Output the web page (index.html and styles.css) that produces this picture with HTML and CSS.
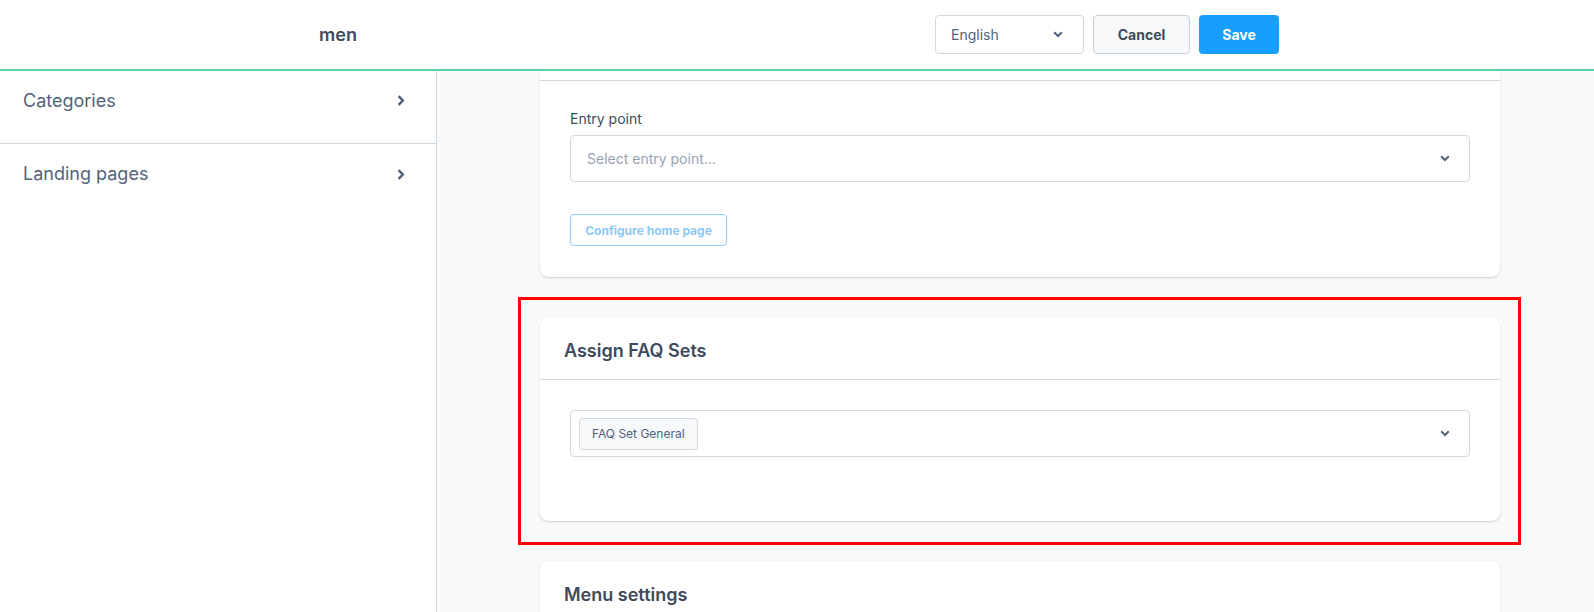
FILE: index.html
```html
<!DOCTYPE html>
<html lang="en">
<head>
    <meta charset="UTF-8">
    <title>Edit menu</title>
    <meta name="viewport" content="width=device-width, initial-scale=1.0">
    <link rel="stylesheet" href="styles.css">
</head>
<body>

<header class="topbar">
    <div class="topbar-title">men</div>
    <div class="topbar-actions">
        <div class="lang-select">
            <span>English</span>
            <svg class="chev-down" width="10" height="7" viewBox="0 0 10 7"><path d="M1.2 1.2 5 5 8.8 1.2" fill="none" stroke="#52627a" stroke-width="2"/></svg>
        </div>
        <button class="btn btn-cancel">Cancel</button>
        <button class="btn btn-save">Save</button>
    </div>
</header>

<div class="layout">
    <aside class="sidebar">
        <div class="nav-item">
            <span>Categories</span>
            <svg class="chev-right" width="8" height="11" viewBox="0 0 8 11"><path d="M1.6 1.2 5.8 5.5 1.6 9.8" fill="none" stroke="#4f5f74" stroke-width="2.4"/></svg>
        </div>
        <div class="nav-item no-border">
            <span>Landing pages</span>
            <svg class="chev-right" width="8" height="11" viewBox="0 0 8 11"><path d="M1.6 1.2 5.8 5.5 1.6 9.8" fill="none" stroke="#4f5f74" stroke-width="2.4"/></svg>
        </div>
    </aside>

    <main class="main">
        <div class="content">
            <!-- header of this card is scrolled out of view -->
            <div class="card">
                <div class="card-header"></div>
                <div class="card-body card-body-home">
                    <label class="field-label">Entry point</label>
                    <div class="select">
                        <span class="placeholder">Select entry point...</span>
                        <svg class="chev-down" width="10" height="7" viewBox="0 0 10 7"><path d="M1.2 1.2 5 5 8.8 1.2" fill="none" stroke="#52627a" stroke-width="2"/></svg>
                    </div>
                    <button class="btn-outline" disabled>Configure home page</button>
                </div>
            </div>

            <div class="card highlight">
                <div class="card-header">Assign FAQ Sets</div>
                <div class="card-body">
                    <div class="select select-tags">
                        <span class="tag">FAQ Set General</span>
                        <svg class="chev-down" width="10" height="7" viewBox="0 0 10 7"><path d="M1.2 1.2 5 5 8.8 1.2" fill="none" stroke="#52627a" stroke-width="2"/></svg>
                    </div>
                </div>
            </div>

            <div class="card">
                <div class="card-header">Menu settings</div>
                <div class="card-body"></div>
            </div>
        </div>
    </main>
</div>

</body>
</html>
```

FILE: styles.css
```css
* {
    margin: 0;
    padding: 0;
    box-sizing: border-box;
    font-family: 'Inter', 'Noto Sans', sans-serif;
}

body {
    background: #fff;
    color: #3d4a5c;
    height: 612px;
    overflow: hidden;
}

.topbar {
    display: flex;
    align-items: center;
    height: 71px;
    padding-bottom: 1px;
    background: #fff;
    border-bottom: 2px solid #5bd3a0;
    position: relative;
    z-index: 2;
}

.topbar-title {
    width: 676px;
    text-align: center;
    font-size: 18px;
    font-weight: 600;
    color: #3d4a5c;
}

.topbar-actions {
    display: flex;
    gap: 9px;
    margin-left: 259px;
}

.lang-select {
    width: 149px;
    height: 39px;
    display: flex;
    align-items: center;
    justify-content: space-between;
    padding: 0 20px 0 15px;
    border: 1px solid #d1d9e0;
    border-radius: 4px;
    font-size: 14px;
    color: #52627a;
}

.btn {
    height: 39px;
    border-radius: 4px;
    font-size: 14px;
    font-weight: 700;
    cursor: pointer;
}

.btn-cancel {
    width: 97px;
    background: #f6f8fa;
    border: 1px solid #c9d2dc;
    color: #3d4a5c;
}

.btn-save {
    width: 80px;
    background: #189eff;
    border: none;
    color: #fff;
}

.layout {
    display: flex;
    height: 541px;
}

.sidebar {
    width: 437px;
    border-right: 1px solid #d1d9e0;
    background: #fff;
}

.nav-item {
    height: 73px;
    display: flex;
    align-items: center;
    justify-content: space-between;
    padding: 19px 31px 32px 23px;
    border-bottom: 1px solid #d1d9e0;
    font-size: 18px;
    line-height: 22px;
    color: #52627a;
}

.nav-item.no-border {
    border-bottom: none;
}

.main {
    flex: 1;
    background: #f8f9fa;
    overflow: hidden;
}

/* scrolled: first card header sits under the top bar */
.content {
    width: 1063px;
    padding-left: 103px;
    margin-top: -53px;
    display: flex;
    flex-direction: column;
    gap: 40px;
}

.card {
    background: #fff;
    border-radius: 8px;
    box-shadow: 0 1px 2px rgba(0,0,0,0.16), 0 0 1px rgba(0,0,0,0.06);
}

.card-header {
    height: 63px;
    padding: 23px 24px 17px;
    font-size: 18px;
    line-height: 22px;
    font-weight: 600;
    color: #3d4a5c;
    border-bottom: 1px solid #d1d9e0;
}

.card-body {
    padding: 30px;
}

.card-body-home {
    padding-bottom: 31px;
}

.field-label {
    display: block;
    font-size: 14px;
    line-height: 16px;
    margin-bottom: 8px;
    color: #3d4a5c;
}

.select {
    height: 47px;
    display: flex;
    align-items: center;
    justify-content: space-between;
    padding: 0 19px 0 16px;
    border: 1px solid #d1d9e0;
    border-radius: 4px;
    font-size: 14px;
}

.placeholder {
    color: #97a3b3;
}

.btn-outline {
    margin-top: 32px;
    width: 157px;
    height: 32px;
    background: #fff;
    border: 1px solid #8ecdfd;
    border-radius: 4px;
    color: #8dc8fb;
    font-size: 12px;
    font-weight: 700;
}

.select-tags {
    padding-left: 8px;
    margin-bottom: 34px;
}

.tag {
    height: 32px;
    display: flex;
    align-items: center;
    padding: 0 12px;
    background: #f6f8fa;
    border: 1px solid #d1d9e0;
    border-radius: 3px;
    font-size: 12px;
    color: #52627a;
}

.highlight {
    position: relative;
}

.highlight::after {
    content: "";
    position: absolute;
    top: -20px;
    left: -22px;
    right: -21px;
    bottom: -24px;
    border: 3px solid #ff0000;
    pointer-events: none;
}
```
